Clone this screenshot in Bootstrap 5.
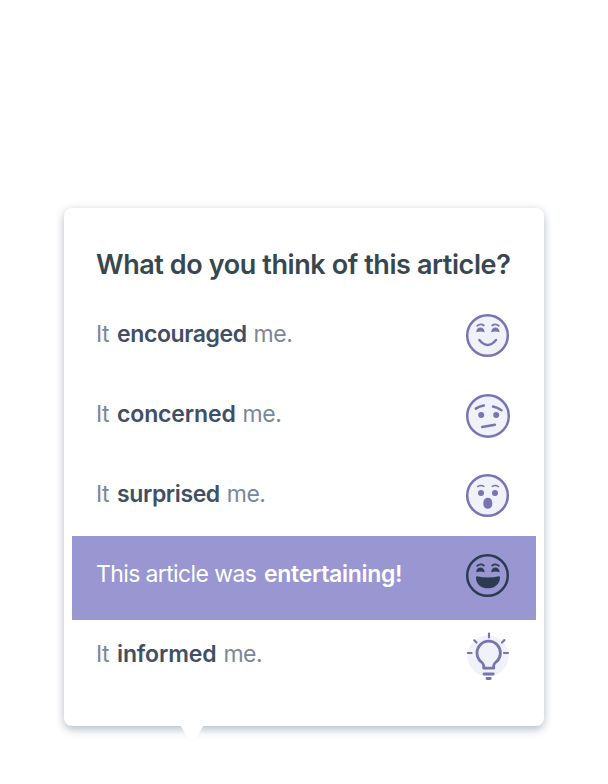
<!DOCTYPE html>
<html lang="en">
<head>
<meta charset="utf-8">
<meta name="viewport" content="width=device-width, initial-scale=1">
<title>Article feedback</title>
<link href="https://cdn.jsdelivr.net/npm/bootstrap@5.3.0/dist/css/bootstrap.min.css" rel="stylesheet">
<style>
body{background:#fff;font-family:Inter,"Liberation Sans",sans-serif;min-height:784px;padding:208px 64px 0}
.survey{height:518px;border:0;border-radius:8px;background:#fff;padding:0 8px;box-shadow:0 4px 8px rgba(65,84,115,.32),0 0 8px rgba(65,84,115,.09)}
.survey h1{margin:40px 24px 15px;font-size:27px;line-height:33px;font-weight:600;color:#37474f;letter-spacing:-.41px;white-space:nowrap}
.choice{height:80px;border:0;background:transparent;padding:0 24px;color:#79879b;font-size:23px;line-height:28px;white-space:pre;text-align:left}
.choice b{font-weight:600;color:#3f4f65;margin-left:2px;margin-right:1px}
.choice.picked{height:84px;margin-bottom:-4px;background:#9996d2;color:#fff}
.choice.picked b{color:#fff;letter-spacing:-.32px}
.choice.picked .phrase{letter-spacing:-.62px}
.tight b{letter-spacing:-.4px}
.snug b{letter-spacing:-.14px}
.phrase{margin-top:24px;font-weight:400;letter-spacing:-.5px}
.face{width:48px;height:56px;margin:12px 0 0;fill:none;stroke:#7874b2;stroke-width:2.5;stroke-linecap:round;stroke-linejoin:round;flex:none}
.face .solid{fill:#7874b2;stroke:none}
.face .tint{fill:#f1f2f9}
.picked .face{stroke:#2b3c52}
.picked .face .solid{fill:#2b3c52}
.picked .face .tint{fill:none}
.pointer{position:absolute;left:116px;top:517px;width:24px;height:18px;background:#fff;clip-path:polygon(0 0,100% 0,54% 100%,46% 100%)}
</style>
<script src="https://cdn.jsdelivr.net/npm/bootstrap@5.3.0/dist/js/bootstrap.bundle.min.js"></script>
</head>
<body>
<main class="survey card">
<h1>What do you think of this article?</h1>
<button class="choice tight d-flex justify-content-between align-items-start"><span class="phrase">It <b>encouraged</b> me.</span>
<svg class="face" viewBox="0 0 48 56"><circle class="tint" cx="23.5" cy="27.5" r="20.3"/><path d="M13.2 17.8q3.6-2.6 6.6-.3M28.2 17.5q3.2-2.3 6.6.3" stroke-width="1.8"/><path class="solid" d="M12.2 24.2c.2-3 1.8-4.6 4.2-4.6s4 1.6 4.2 4.6q-4.2-1.4-8.4 0M27.2 24.2c.2-3 1.8-4.6 4.2-4.6s4 1.6 4.2 4.6q-4.2-1.4-8.4 0"/><path d="M15.4 32q8.3 10 16.6 0"/></svg></button>
<button class="choice snug d-flex justify-content-between align-items-start"><span class="phrase">It <b>concerned</b> me.</span>
<svg class="face" viewBox="0 0 48 56"><circle class="tint" cx="24" cy="28" r="20.8"/><path d="M11.8 20.6q3.6-2.5 8.1-3.2M29 18.6q4.6.8 8.4 3.6M18.2 39l12.7-2.3"/><circle class="solid" cx="17.2" cy="27" r="3"/><circle class="solid" cx="32.2" cy="27" r="3"/></svg></button>
<button class="choice tight d-flex justify-content-between align-items-start"><span class="phrase">It <b>surprised</b> me.</span>
<svg class="face" viewBox="0 0 48 56"><circle class="tint" cx="23.5" cy="27.5" r="20.3"/><path d="M13.7 18.6q3.2-1.9 6.2-.2M28.2 18.4q3.2-1.7 6.2.2" stroke-width="1.5"/><circle class="solid" cx="17" cy="25" r="3"/><circle class="solid" cx="31" cy="25" r="3"/><rect class="solid" x="19.4" y="29.8" width="8.8" height="11" rx="4.4"/></svg></button>
<button class="choice picked d-flex justify-content-between align-items-start"><span class="phrase">This article was <b>entertaining!</b></span>
<svg class="face" viewBox="0 0 48 56"><circle class="tint" cx="23.5" cy="27.5" r="20.3"/><path d="M13.2 17.8q3.6-2.6 6.6-.3M28.2 17.5q3.2-2.3 6.6.3" stroke-width="1.8"/><path class="solid" d="M12.2 24.2c.2-3 1.8-4.6 4.2-4.6s4 1.6 4.2 4.6q-4.2-1.4-8.4 0M27.2 24.2c.2-3 1.8-4.6 4.2-4.6s4 1.6 4.2 4.6q-4.2-1.4-8.4 0M13 28.3q10.7 2.4 22 0q1.2 0 1 1.4c-.6 14.2-23.8 14.2-24 0q-.1-1.4 1-1.4"/></svg></button>
<button class="choice snug d-flex justify-content-between align-items-start"><span class="phrase">It <b>informed</b> me.</span>
<svg class="face" viewBox="0 0 48 56"><circle class="tint" cx="24" cy="28" r="20.5" stroke="none"/><path d="M25 5.5v3.8M10.3 12.3l2.2 2.2M38 14.5l2.4-2.4M3.8 25h3.8M40 25h4" stroke-width="2.2"/><path d="M19.7 40.2v-2.6c0-1.7-1.2-2.6-3-4.2a11.7 11.7 0 1 1 16 0c-1.8 1.6-3 2.5-3 4.2v2.6z" stroke-width="2.8"/><path d="M20 46h9.3M23 50.5h3.3" stroke-width="2.8"/></svg></button>
<div class="pointer"></div>
</main>
</body>
</html>
